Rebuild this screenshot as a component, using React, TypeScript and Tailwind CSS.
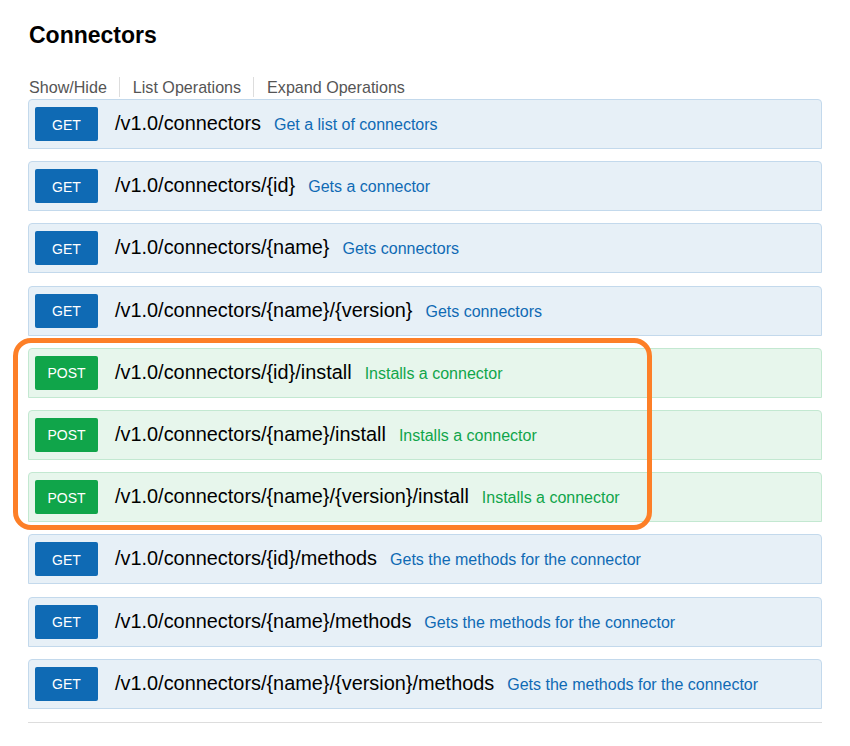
import React from "react";

type Op = {
  method: "GET" | "POST";
  path: string;
  summary: string;
};

const ops: Op[] = [
  { method: "GET", path: "/v1.0/connectors", summary: "Get a list of connectors" },
  { method: "GET", path: "/v1.0/connectors/{id}", summary: "Gets a connector" },
  { method: "GET", path: "/v1.0/connectors/{name}", summary: "Gets connectors" },
  { method: "GET", path: "/v1.0/connectors/{name}/{version}", summary: "Gets connectors" },
  { method: "POST", path: "/v1.0/connectors/{id}/install", summary: "Installs a connector" },
  { method: "POST", path: "/v1.0/connectors/{name}/install", summary: "Installs a connector" },
  { method: "POST", path: "/v1.0/connectors/{name}/{version}/install", summary: "Installs a connector" },
  { method: "GET", path: "/v1.0/connectors/{id}/methods", summary: "Gets the methods for the connector" },
  { method: "GET", path: "/v1.0/connectors/{name}/methods", summary: "Gets the methods for the connector" },
  { method: "GET", path: "/v1.0/connectors/{name}/{version}/methods", summary: "Gets the methods for the connector" },
];

function OperationRow({ op }: { op: Op }) {
  const isPost = op.method === "POST";
  return (
    <li
      className={
        "h-[50px] flex items-center pl-[6px] border rounded-t-[4px] " +
        (isPost ? "bg-[#e7f6ec] border-[#c3e8d1]" : "bg-[#e7f0f7] border-[#c3d9ec]")
      }
    >
      <span
        className={
          "w-[63px] h-[34px] pt-[2px] flex items-center justify-center rounded-[2px] text-white text-[14px] " +
          (isPost ? "bg-[#10a54a]" : "bg-[#0f6ab4]")
        }
      >
        {op.method}
      </span>
      <span className="ml-[17px] text-[19.9px] text-black leading-none">{op.path}</span>
      <span
        className={
          "ml-[13px] text-[16px] leading-none mt-[2px] " +
          (isPost ? "text-[#10a54a]" : "text-[#0f6ab4]")
        }
      >
        {op.summary}
      </span>
    </li>
  );
}

export default function App() {
  return (
    <main className="relative min-h-[746px] bg-white px-[28px] font-['Liberation_Sans',Arial,sans-serif]">
      <h2 className="pt-[22px] pl-[1px] text-[23px] font-bold text-black leading-[26px]">
        Connectors
      </h2>

      <ul className="mt-[29px] flex items-center text-[16.1px] text-[#555] leading-[20px]">
        <li className="pl-[1px] pr-[12px] border-r border-[#ddd]">Show/Hide</li>
        <li className="pl-[13px] pr-[12px] border-r border-[#ddd]">List Operations</li>
        <li className="pl-[13px]">Expand Operations</li>
      </ul>

      <ul className="mt-[2px] flex flex-col gap-[12.2px]">
        {ops.map((op) => (
          <OperationRow key={op.method + op.path} op={op} />
        ))}
      </ul>

      <div className="mt-[13px] border-t border-[#ddd]" />

      {/* highlight round the POST operations */}
      <div className="absolute left-[13px] top-[338px] w-[639px] h-[192px] border-[5px] border-[#fd7f27] rounded-[18px] pointer-events-none" />
    </main>
  );
}
